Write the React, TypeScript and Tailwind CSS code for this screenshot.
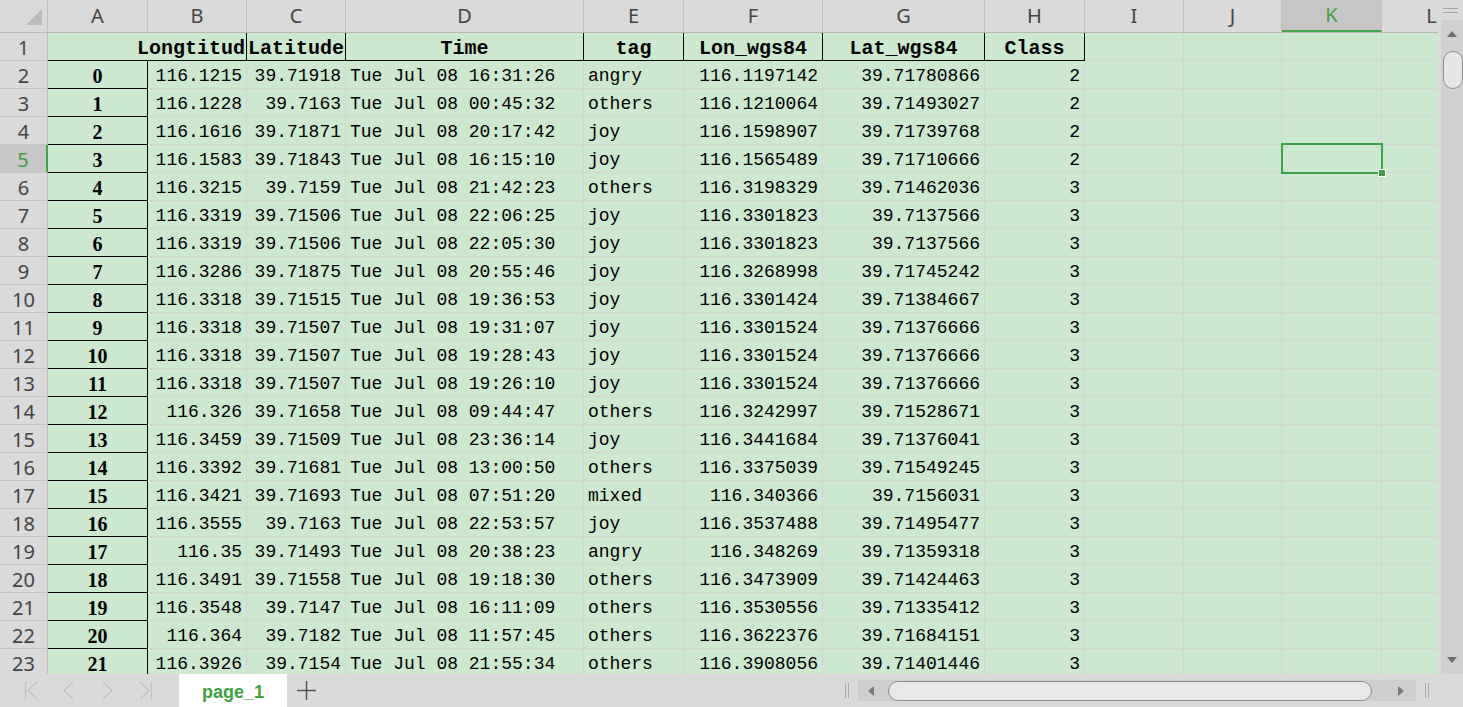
import React from "react";

const GRID =
  "grid grid-cols-[48px_100px_99px_99px_238px_100px_139px_162px_100px_99px_98px_100px_100px]";
const LETTERS = ["A", "B", "C", "D", "E", "F", "G", "H", "I", "J", "K", "L"];
const HEAD = ["", "Longtitud", "Latitude", "Time", "tag", "Lon_wgs84", "Lat_wgs84", "Class"];

type Row = [string, string, string, string, string, string, string];

const DATA: Row[] = [
  ["116.1215", "39.71918", "Tue Jul 08 16:31:26", "angry", "116.1197142", "39.71780866", "2"],
  ["116.1228", "39.7163", "Tue Jul 08 00:45:32", "others", "116.1210064", "39.71493027", "2"],
  ["116.1616", "39.71871", "Tue Jul 08 20:17:42", "joy", "116.1598907", "39.71739768", "2"],
  ["116.1583", "39.71843", "Tue Jul 08 16:15:10", "joy", "116.1565489", "39.71710666", "2"],
  ["116.3215", "39.7159", "Tue Jul 08 21:42:23", "others", "116.3198329", "39.71462036", "3"],
  ["116.3319", "39.71506", "Tue Jul 08 22:06:25", "joy", "116.3301823", "39.7137566", "3"],
  ["116.3319", "39.71506", "Tue Jul 08 22:05:30", "joy", "116.3301823", "39.7137566", "3"],
  ["116.3286", "39.71875", "Tue Jul 08 20:55:46", "joy", "116.3268998", "39.71745242", "3"],
  ["116.3318", "39.71515", "Tue Jul 08 19:36:53", "joy", "116.3301424", "39.71384667", "3"],
  ["116.3318", "39.71507", "Tue Jul 08 19:31:07", "joy", "116.3301524", "39.71376666", "3"],
  ["116.3318", "39.71507", "Tue Jul 08 19:28:43", "joy", "116.3301524", "39.71376666", "3"],
  ["116.3318", "39.71507", "Tue Jul 08 19:26:10", "joy", "116.3301524", "39.71376666", "3"],
  ["116.326", "39.71658", "Tue Jul 08 09:44:47", "others", "116.3242997", "39.71528671", "3"],
  ["116.3459", "39.71509", "Tue Jul 08 23:36:14", "joy", "116.3441684", "39.71376041", "3"],
  ["116.3392", "39.71681", "Tue Jul 08 13:00:50", "others", "116.3375039", "39.71549245", "3"],
  ["116.3421", "39.71693", "Tue Jul 08 07:51:20", "mixed", "116.340366", "39.7156031", "3"],
  ["116.3555", "39.7163", "Tue Jul 08 22:53:57", "joy", "116.3537488", "39.71495477", "3"],
  ["116.35", "39.71493", "Tue Jul 08 20:38:23", "angry", "116.348269", "39.71359318", "3"],
  ["116.3491", "39.71558", "Tue Jul 08 19:18:30", "others", "116.3473909", "39.71424463", "3"],
  ["116.3548", "39.7147", "Tue Jul 08 16:11:09", "others", "116.3530556", "39.71335412", "3"],
  ["116.364", "39.7182", "Tue Jul 08 11:57:45", "others", "116.3622376", "39.71684151", "3"],
  ["116.3926", "39.7154", "Tue Jul 08 21:55:34", "others", "116.3908056", "39.71401446", "3"],
];

// left-aligned columns inside the data (D, E)
const LEFT = [false, false, true, true, false, false, false];

const CELL = "flex h-[28px] items-center whitespace-nowrap border-r border-b";
const GRAY = "border-r-[#d3d6d3] border-b-[#d3d6d3]";
const MONO = "font-['Liberation_Mono',monospace] text-[18px] leading-none text-black";

function RowHead({ n }: { n: number }) {
  const active = n === 5;
  return (
    <div
      className={
        active
          ? "flex h-[28px] items-center justify-center border-r-2 border-b border-r-[#42a548] border-b-[#c4c4c4] bg-[#c8c8c8] pt-[3px] font-['Noto_Sans',sans-serif] text-[20px] leading-none text-[#3f9e44]"
          : "flex h-[28px] items-center justify-center border-r border-b border-r-[#bdbdbd] border-b-[#c4c4c4] bg-[#dadada] pt-[3px] font-['Noto_Sans',sans-serif] text-[20px] leading-none text-[#444]"
      }
    >
      {n}
    </div>
  );
}

function EmptyCells({ row }: { row: number }) {
  return (
    <>
      {["I", "J", "K", "L"].map((c) => (
        <div key={c} className={`${CELL} ${GRAY} relative`}>
          {c === "K" && row === 5 && (
            <div className="absolute -left-[1px] -top-[2px] z-10 h-[31px] w-[102px] border-2 border-[#3e9f45]">
              <div className="absolute -bottom-[5px] -right-[5px] h-[8px] w-[8px] border border-white bg-[#3e9f45]" />
            </div>
          )}
        </div>
      ))}
    </>
  );
}

function Sheet() {
  return (
    <div className="h-[674px] w-[1438px] overflow-hidden bg-[#cce8cf]">
      {/* column letters */}
      <div className={`${GRID} h-[33px] border-b border-[#b8b8b8] bg-[#dadada]`}>
        <div className="relative border-r border-[#c0c0c0]">
          <svg className="absolute left-[25px] top-[8px]" width="18" height="18">
            <polygon points="17,1 17,17 1,17" fill="#bcbcbc" />
          </svg>
        </div>
        {LETTERS.map((l) => (
          <div
            key={l}
            className={
              l === "K"
                ? "flex items-center justify-center border-r border-b-2 border-r-[#c0c0c0] border-b-[#43a548] bg-[#c6c6c6] font-['Noto_Sans',sans-serif] text-[20px] leading-none text-[#3f9e44]"
                : "flex items-center justify-center border-r border-[#c0c0c0] font-['Noto_Sans',sans-serif] text-[20px] leading-none text-[#444]"
            }
          >
            {l}
          </div>
        ))}
      </div>

      {/* row 1: table header */}
      <div className={GRID}>
        <RowHead n={1} />
        {HEAD.map((h, i) => (
          <div
            key={i}
            className={`${CELL} border-b-black ${
              i === 0 ? "border-r-[#cce8cf]" : "border-r-black"
            } ${i === 1 ? "justify-end overflow-visible pr-[1px]" : "justify-center overflow-hidden"} pt-[4px] font-['Liberation_Mono',monospace] text-[20px] font-bold leading-none text-black`}
          >
            {h}
          </div>
        ))}
        <EmptyCells row={1} />
      </div>

      {DATA.map((r, idx) => (
        <div key={idx} className={GRID}>
          <RowHead n={idx + 2} />
          <div
            className={`${CELL} justify-center border-r-black border-b-black pt-[2px] font-['Liberation_Serif',serif] text-[20px] font-bold leading-none text-black`}
          >
            {idx}
          </div>
          {r.map((v, i) => (
            <div
              key={i}
              className={`${CELL} ${GRAY} overflow-hidden pt-[3px] ${MONO} ${
                LEFT[i] ? "justify-start pl-[4px]" : "justify-end pr-[4px]"
              }`}
            >
              {v}
            </div>
          ))}
          <EmptyCells row={idx + 2} />
        </div>
      ))}
    </div>
  );
}

function VScroll() {
  return (
    <div className="flex h-[674px] w-[25px] flex-col">
      <div className="flex h-[20px] flex-col items-center justify-center gap-[3px] bg-[#dadada]">
        <div className="h-[1px] w-[15px] bg-[#a6a6a6]" />
        <div className="h-[1px] w-[15px] bg-[#a6a6a6]" />
      </div>
      <div className="flex flex-1 flex-col items-center border-l-[3px] border-[#dcdcdc] bg-[#d0d0d0]">
        <svg className="mt-[11px]" width="10" height="6">
          <polygon points="5,0 10,6 0,6" fill="#6e6e6e" />
        </svg>
        <div className="ml-[1px] mt-[14px] h-[38px] w-[20px] rounded-[10px] border border-[#8f8f8f] bg-[#e7e7e7]" />
        <div className="flex-1" />
        <svg className="mb-[11px]" width="10" height="6">
          <polygon points="0,0 10,0 5,6" fill="#6e6e6e" />
        </svg>
      </div>
    </div>
  );
}

function TabBar() {
  const stroke = "#c2c2c2";
  return (
    <div className="flex h-[33px] bg-[#dadada]">
      <div className="w-[179px]">
        <svg width="179" height="33">
          <g fill="none" stroke={stroke} strokeWidth="1.3">
            <line x1="25.5" y1="8" x2="25.5" y2="25" />
            <polyline points="37,8 28,16.5 37,25" />
            <polyline points="73,8 64,16.5 73,25" />
            <polyline points="103,8 112,16.5 103,25" />
            <polyline points="140,8 149,16.5 140,25" />
            <line x1="151.5" y1="8" x2="151.5" y2="25" />
          </g>
        </svg>
      </div>
      <div className="flex w-[108px] items-center justify-center bg-white pt-[2px] font-['Liberation_Sans',sans-serif] text-[18px] font-bold leading-none text-[#3fa23b]">
        page_1
      </div>
      <div className="w-[40px]">
        <svg width="40" height="33">
          <g stroke="#555" strokeWidth="1.5">
            <line x1="10" y1="16.5" x2="29" y2="16.5" />
            <line x1="19.5" y1="7" x2="19.5" y2="26" />
          </g>
        </svg>
      </div>
      <div className="flex-1" />
      <div className="flex w-[625px] items-center">
        <svg width="20" height="33">
          <g stroke="#a8a8a8" strokeWidth="1">
            <line x1="7.5" y1="9" x2="7.5" y2="24" />
            <line x1="10.5" y1="9" x2="10.5" y2="24" />
          </g>
        </svg>
        <div className="flex h-[21px] w-[558px] items-center bg-[#cfcfcf]">
          <svg className="ml-[10px]" width="6" height="10">
            <polygon points="6,0 6,10 0,5" fill="#7a7a7a" />
          </svg>
          <div className="ml-[14px] h-[20px] w-[484px] rounded-[10px] border border-[#8c8c8c] bg-[#e8e8e8]" />
          <div className="flex-1" />
          <svg className="mr-[12px]" width="6" height="10">
            <polygon points="0,0 6,5 0,10" fill="#7a7a7a" />
          </svg>
        </div>
        <svg width="20" height="33">
          <g stroke="#a8a8a8" strokeWidth="1">
            <line x1="9.5" y1="9" x2="9.5" y2="24" />
            <line x1="12.5" y1="9" x2="12.5" y2="24" />
          </g>
        </svg>
      </div>
    </div>
  );
}

export default function App() {
  return (
    <div className="h-[707px] w-[1463px] overflow-hidden bg-[#dadada]">
      <div className="flex">
        <Sheet />
        <VScroll />
      </div>
      <TabBar />
    </div>
  );
}
